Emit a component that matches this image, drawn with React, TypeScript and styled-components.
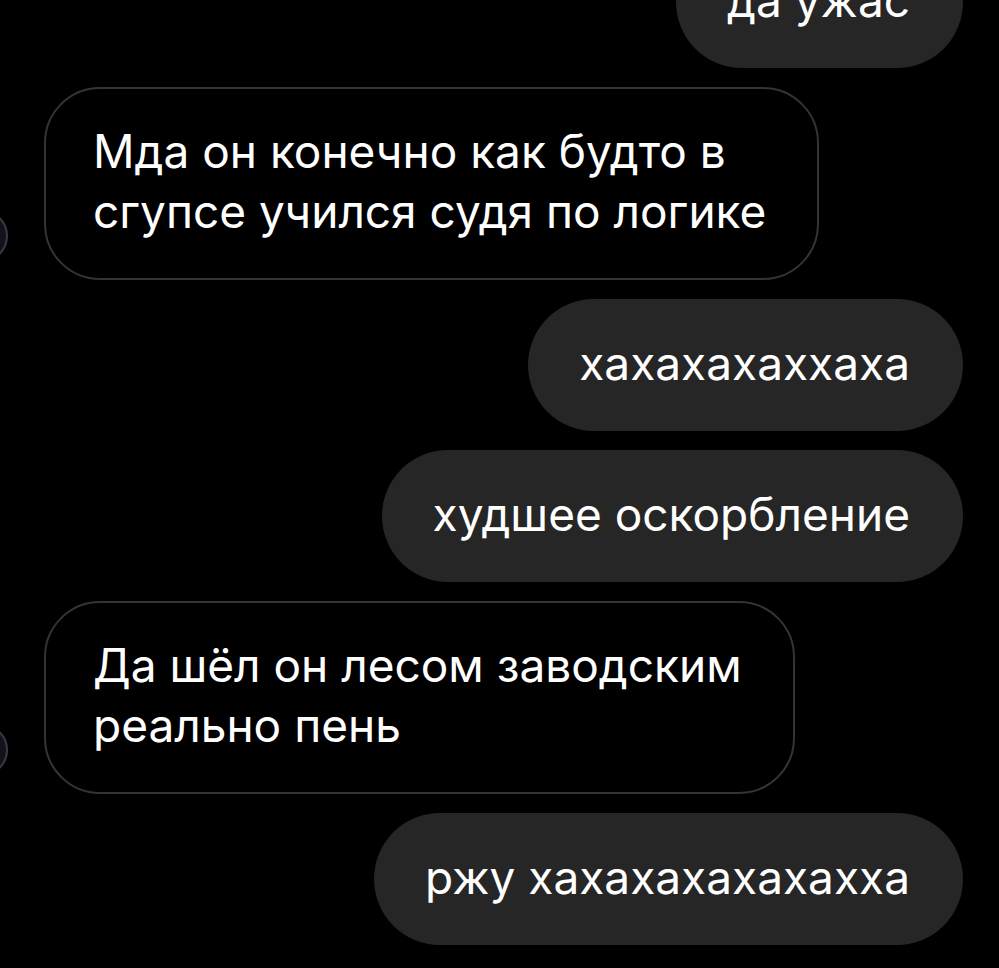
import styled, { createGlobalStyle } from 'styled-components';

const GlobalStyles = createGlobalStyle`
  html, body {
    margin: 0;
    padding: 0;
    background: #000000;
    overflow: hidden;
  }
  body {
    font-family: Inter, "Noto Sans", "DejaVu Sans", sans-serif;
    -webkit-font-smoothing: antialiased;
  }
`;

const Thread = styled.main`
  display: flex;
  flex-direction: column;
  gap: 19px;
  margin-top: -64px;
  padding: 0 36px 0 0;
  width: 999px;
  height: 1032px;
  box-sizing: border-box;
  overflow: hidden;
`;

const Row = styled.div<{ $out?: boolean }>`
  display: flex;
  align-items: flex-end;
  justify-content: ${(p) => (p.$out ? 'flex-end' : 'flex-start')};
`;

const Avatar = styled.div`
  width: 52px;
  height: 52px;
  flex: none;
  border-radius: 50%;
  background: #12121c;
  border: 2px solid #3a3a44;
  box-sizing: border-box;
  margin-left: -44px;
  margin-right: 36px;
  margin-bottom: 18px;
`;

const Bubble = styled.div<{ $out?: boolean }>`
  color: #ffffff;
  font-size: 46px;
  line-height: 60px;
  white-space: nowrap;
  box-sizing: border-box;
  padding: ${(p) => (p.$out ? '34px 53px 38px 51px' : '32px 51px 37px 47px')};
  border-radius: ${(p) => (p.$out ? '66px' : '56px')};
  background: ${(p) => (p.$out ? '#262626' : '#000000')};
  border: ${(p) => (p.$out ? 'none' : '2px solid #343434')};
`;

type Msg = { out: boolean; lines: string[] };

const messages: Msg[] = [
  { out: true, lines: ['да ужас'] },
  { out: false, lines: ['Мда он конечно как будто в', 'сгупсе учился судя по логике'] },
  { out: true, lines: ['хахахахаххаха'] },
  { out: true, lines: ['худшее оскорбление'] },
  { out: false, lines: ['Да шёл он лесом заводским', 'реально пень'] },
  { out: true, lines: ['ржу хахахахахахахха'] },
];

export default function App() {
  return (
    <>
      <GlobalStyles />
      <Thread>
        {messages.map((m, i) => (
          <Row key={i} $out={m.out}>
            {!m.out && <Avatar />}
            <Bubble $out={m.out}>
              {m.lines.map((l, j) => (
                <div key={j}>{l}</div>
              ))}
            </Bubble>
          </Row>
        ))}
      </Thread>
    </>
  );
}
